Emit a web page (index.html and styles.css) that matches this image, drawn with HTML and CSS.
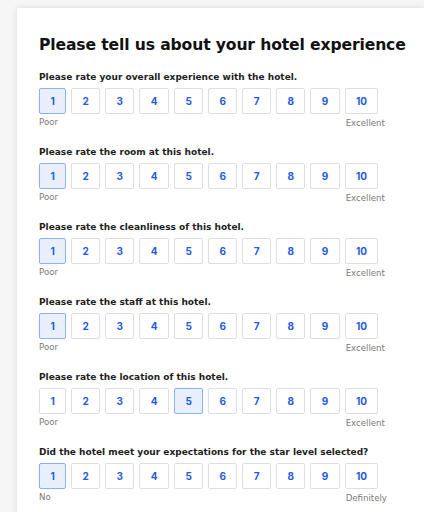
FILE: index.html
```html
<!DOCTYPE html>
<html>
<head>
<meta charset="utf-8">
<link rel="stylesheet" href="styles.css">
</head>
<body>
<div class="card">
  <h1 class="title">Please tell us about your hotel experience</h1>

  <div class="question">
    <div class="q-label">Please rate your overall experience with the hotel.</div>
    <div class="scale">
      <div class="opt selected">1</div><div class="opt">2</div><div class="opt">3</div><div class="opt">4</div><div class="opt">5</div><div class="opt">6</div><div class="opt">7</div><div class="opt">8</div><div class="opt">9</div><div class="opt last">10<span class="cap-end">Excellent</span></div>
    </div>
    <div class="cap-start">Poor</div>
  </div>

  <div class="question">
    <div class="q-label">Please rate the room at this hotel.</div>
    <div class="scale">
      <div class="opt selected">1</div><div class="opt">2</div><div class="opt">3</div><div class="opt">4</div><div class="opt">5</div><div class="opt">6</div><div class="opt">7</div><div class="opt">8</div><div class="opt">9</div><div class="opt last">10<span class="cap-end">Excellent</span></div>
    </div>
    <div class="cap-start">Poor</div>
  </div>

  <div class="question">
    <div class="q-label">Please rate the cleanliness of this hotel.</div>
    <div class="scale">
      <div class="opt selected">1</div><div class="opt">2</div><div class="opt">3</div><div class="opt">4</div><div class="opt">5</div><div class="opt">6</div><div class="opt">7</div><div class="opt">8</div><div class="opt">9</div><div class="opt last">10<span class="cap-end">Excellent</span></div>
    </div>
    <div class="cap-start">Poor</div>
  </div>

  <div class="question">
    <div class="q-label">Please rate the staff at this hotel.</div>
    <div class="scale">
      <div class="opt selected">1</div><div class="opt">2</div><div class="opt">3</div><div class="opt">4</div><div class="opt">5</div><div class="opt">6</div><div class="opt">7</div><div class="opt">8</div><div class="opt">9</div><div class="opt last">10<span class="cap-end">Excellent</span></div>
    </div>
    <div class="cap-start">Poor</div>
  </div>

  <div class="question">
    <div class="q-label">Please rate the location of this hotel.</div>
    <div class="scale">
      <div class="opt">1</div><div class="opt">2</div><div class="opt">3</div><div class="opt">4</div><div class="opt selected">5</div><div class="opt">6</div><div class="opt">7</div><div class="opt">8</div><div class="opt">9</div><div class="opt last">10<span class="cap-end">Excellent</span></div>
    </div>
    <div class="cap-start">Poor</div>
  </div>

  <div class="question">
    <div class="q-label">Did the hotel meet your expectations for the star level selected?</div>
    <div class="scale">
      <div class="opt selected">1</div><div class="opt">2</div><div class="opt">3</div><div class="opt">4</div><div class="opt">5</div><div class="opt">6</div><div class="opt">7</div><div class="opt">8</div><div class="opt">9</div><div class="opt last">10<span class="cap-end">Definitely</span></div>
    </div>
    <div class="cap-start">No</div>
  </div>
</div>
</body>
</html>
```
FILE: styles.css
```css
html, body {
  margin: 0;
  padding: 0;
}
body {
  background: #f6f6f6;
  font-family: "DejaVu Sans", "Noto Sans", sans-serif;
  overflow: hidden;
  height: 512px;
}
.card {
  margin: 8px 0 0 17px;
  background: #ffffff;
  box-shadow: 0 0 6px rgba(0, 0, 0, 0.12);
  padding: 26px 0 0 22px;
  min-height: 520px;
}
.title {
  margin: 0 0 14px 0;
  font-size: 15.6px;
  line-height: 22px;
  font-weight: bold;
  color: #111;
  letter-spacing: -0.13px;
  white-space: nowrap;
}
.question {
  margin-bottom: 17px;
}
.q-label {
  font-size: 9px;
  line-height: 14px;
  font-weight: bold;
  color: #1d1d1d;
  margin-bottom: 4px;
  white-space: nowrap;
}
.scale {
  display: flex;
  gap: 5px;
}
.opt {
  position: relative;
  box-sizing: border-box;
  height: 26px;
  padding: 0 10.4px;
  border: 1px solid #dedede;
  border-radius: 2px;
  display: flex;
  align-items: center;
  justify-content: center;
  font-family: Inter, "DejaVu Sans", sans-serif;
  font-size: 10px;
  font-weight: bold;
  color: #1f5be0;
}
.opt.selected {
  background: #e8f0fe;
  border-color: #8db0ee;
}
.cap-end {
  position: absolute;
  left: 0;
  top: 28px;
  font-family: "DejaVu Sans", sans-serif;
  font-size: 8.6px;
  line-height: 12px;
  font-weight: normal;
  color: #7a7a7a;
  white-space: nowrap;
}
.cap-start {
  margin-top: 2px;
  font-size: 8.6px;
  line-height: 12px;
  color: #7a7a7a;
}
```
